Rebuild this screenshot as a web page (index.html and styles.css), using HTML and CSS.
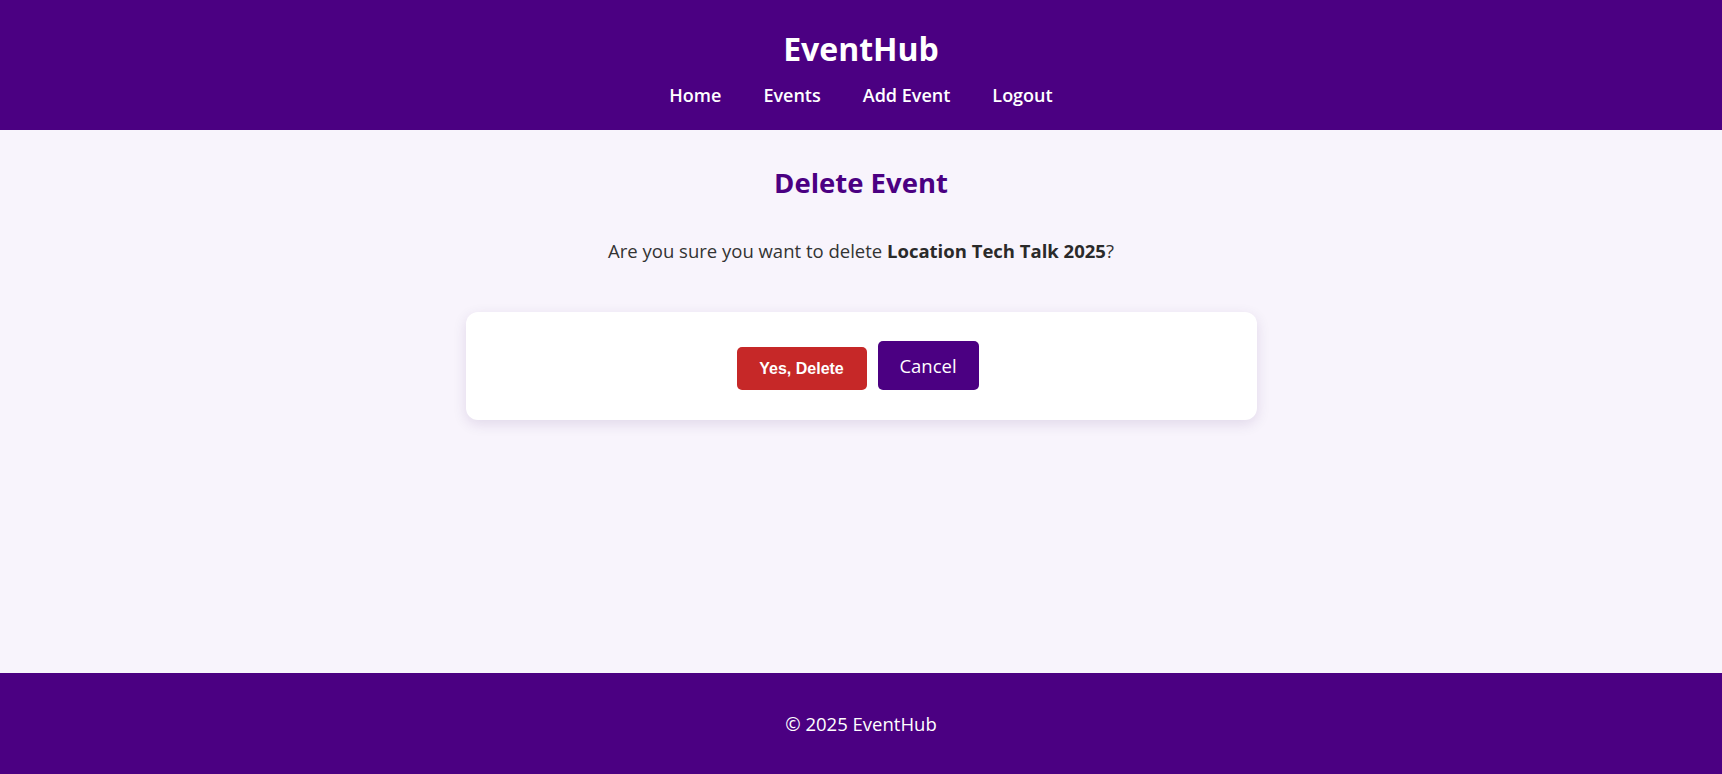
FILE: index.html
```html
<!DOCTYPE html>
<html lang="en">
<head>
<meta charset="utf-8">
<title>Delete Event - EventHub</title>
<link rel="stylesheet" href="styles.css">
</head>
<body>
<header class="site-header">
  <h1 class="brand">EventHub</h1>
  <nav class="nav">
    <a href="#">Home</a>
    <a href="#">Events</a>
    <a href="#">Add Event</a>
    <a href="#">Logout</a>
  </nav>
</header>
<main class="main">
  <h2 class="page-title">Delete Event</h2>
  <p class="confirm">Are you sure you want to delete <strong>Location Tech Talk 2025</strong>?</p>
  <div class="card">
    <form class="actions">
      <button type="button" class="btn-delete">Yes, Delete</button>
      <a href="#" class="btn-cancel">Cancel</a>
    </form>
  </div>
</main>
<footer class="site-footer">
  <p>&copy; 2025 EventHub</p>
</footer>
</body>
</html>
```

FILE: styles.css
```css
html, body {
  margin: 0;
  padding: 0;
}
body {
  font-family: "Segoe UI", "Open Sans", "Noto Sans", sans-serif;
  background: #f8f4fc;
  color: #333;
  min-height: 100vh;
  display: flex;
  flex-direction: column;
}
.site-header {
  background: #4b0082;
  color: #fff;
  text-align: center;
  padding: 26px 0 22px;
}
.brand {
  margin: 0;
  font-size: 32px;
  line-height: 46px;
  font-weight: 700;
}
.nav {
  margin-top: 10px;
  display: flex;
  justify-content: center;
  gap: 42px;
  line-height: 26px;
}
.nav a {
  color: #fff;
  text-decoration: none;
  font-size: 18px;
  font-weight: 600;
}
.main {
  flex: 1;
  text-align: center;
  padding: 33px 0 0;
}
.page-title {
  margin: 0;
  color: #4b0082;
  font-size: 27.5px;
  line-height: 40px;
  font-weight: 700;
}
.confirm {
  margin: 35px 0 0;
  font-size: 18.5px;
  line-height: 26px;
}
.confirm strong {
  font-weight: 700;
  color: #2a2a2a;
}
.card {
  width: 791px;
  box-sizing: border-box;
  margin: 48px auto 0;
  background: #fff;
  border-radius: 12px;
  box-shadow: 0 4px 14px rgba(60, 20, 100, 0.12);
  padding: 29px 20px 30px;
}
.actions {
  display: flex;
  justify-content: center;
  align-items: flex-end;
  gap: 11px;
  padding-right: 7px;
}
.btn-delete {
  font-family: "Liberation Sans", Arial, sans-serif;
  font-size: 16px;
  font-weight: 700;
  line-height: 19px;
  color: #fff;
  background: #c62828;
  border: none;
  border-radius: 5px;
  padding: 12px 0;
  width: 130px;
}
.btn-cancel {
  display: inline-block;
  font-size: 18.5px;
  font-weight: 500;
  line-height: 25px;
  color: #fff;
  background: #4b0082;
  text-decoration: none;
  border-radius: 5px;
  padding: 12px 0;
  width: 101px;
  box-sizing: border-box;
  text-align: center;
}
.site-footer {
  background: #4b0082;
  color: #fff;
  text-align: center;
  padding: 38px 0;
}
.site-footer p {
  margin: 0;
  font-size: 18.5px;
  line-height: 25px;
}
```
